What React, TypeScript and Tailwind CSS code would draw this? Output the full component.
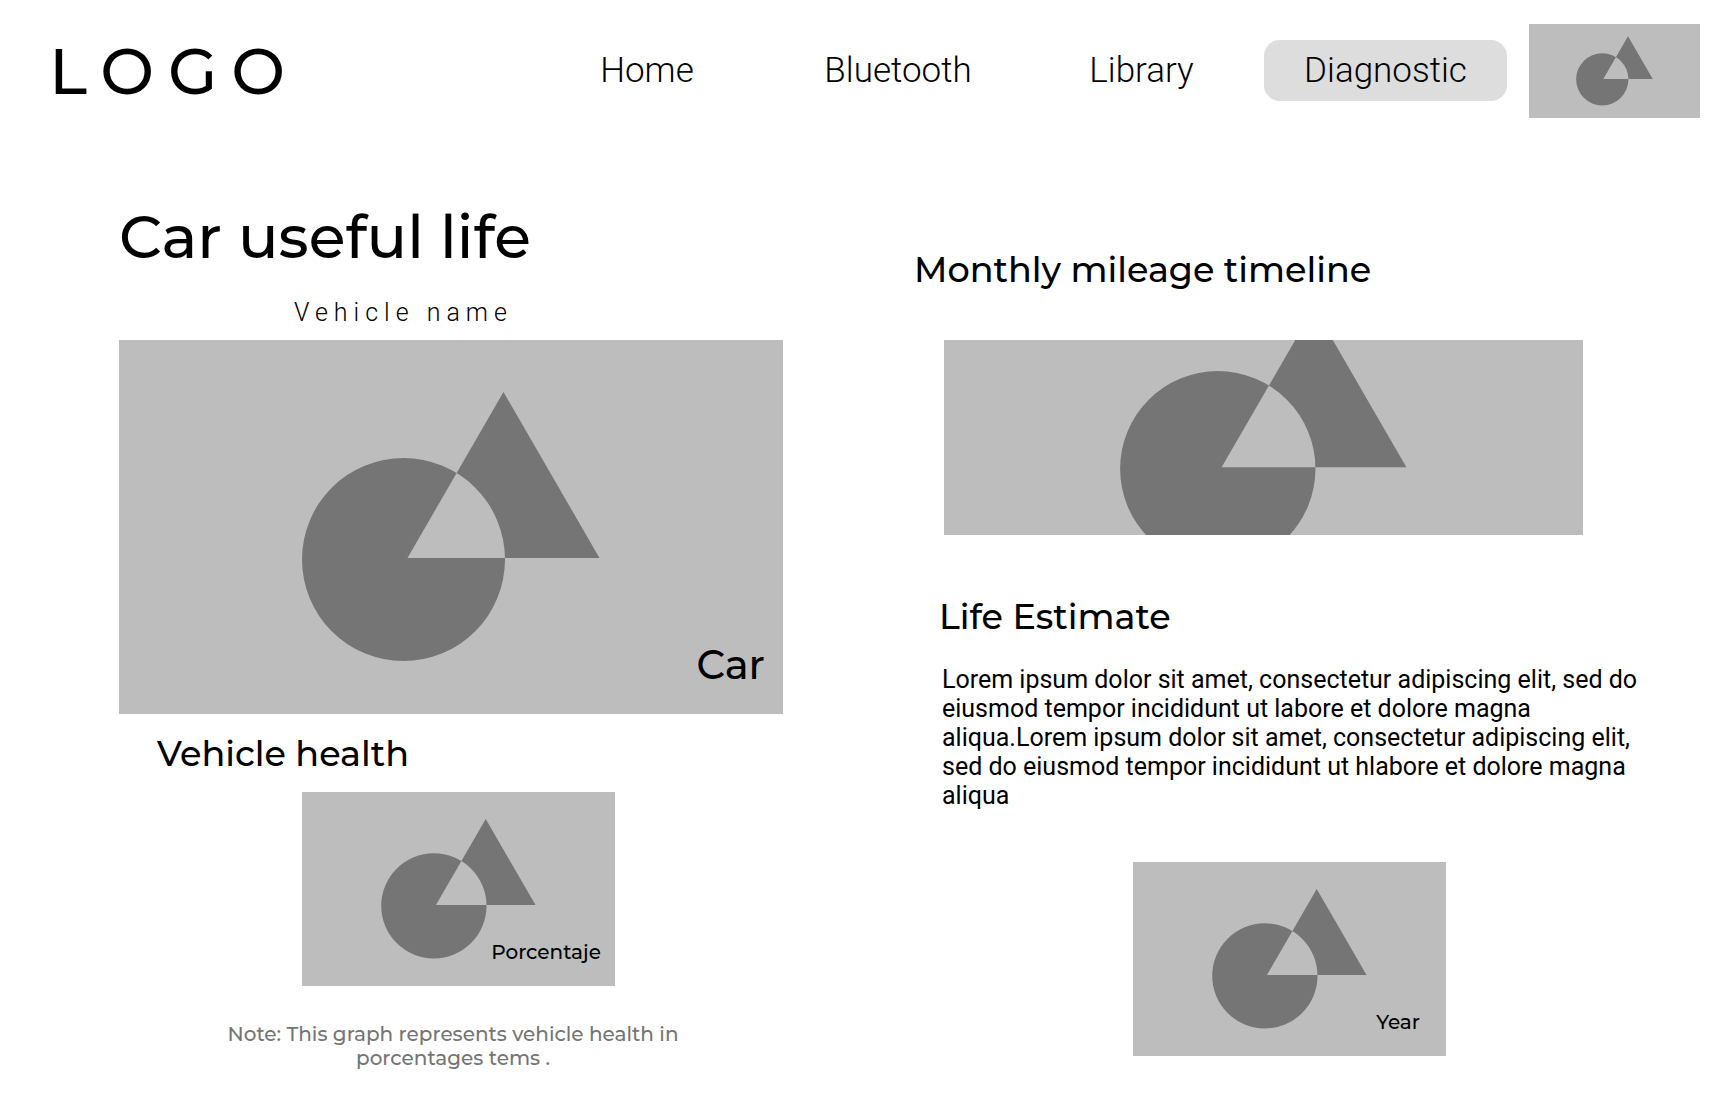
import React from "react";

const heading = "font-['Montserrat','Inter',sans-serif] font-medium";

type PlaceholderProps = {
  label: string;
  className: string;
  children?: React.ReactNode;
};

function Placeholder({ label, className, children }: PlaceholderProps) {
  return (
    <div className={`relative bg-[#bdbdbd] ${className}`}>
      <svg
        role="img"
        aria-label={label}
        viewBox="0 0 664 374"
        preserveAspectRatio="xMidYMid slice"
        className="block h-full w-full"
      >
        <path
          fill="#757575"
          fillRule="evenodd"
          d="M183 219.5a101.5 101.5 0 1 0 203 0a101.5 101.5 0 1 0 -203 0ZM384.500 52L480.500 218H288.500Z"
        />
      </svg>
      {children}
    </div>
  );
}

const links = [
  { name: "Home", width: "w-[260px]", active: false },
  { name: "Bluetooth", width: "w-[242px]", active: false },
  { name: "Library", width: "w-[245px]", active: false },
  { name: "Diagnostic", width: "w-[243px]", active: true },
];

export default function App() {
  return (
    <div className="min-h-screen bg-white pb-12 text-black">
      <header className="flex items-center justify-between pt-6 pr-7 pl-[49px]">
        <a href="#home" className={`${heading} text-[64px] leading-[94px] tracking-[14px]`}>
          LOGO
        </a>
        <div className="flex items-center gap-[22px]">
          <nav aria-label="Main" className="flex">
            {links.map((link) => (
              <a
                key={link.name}
                href={`#${link.name.toLowerCase()}`}
                aria-current={link.active ? "page" : undefined}
                className={`${link.width} ${
                  link.active ? "bg-[#dddddd]" : ""
                } mb-[1px] rounded-2xl text-center font-['Roboto',sans-serif] text-[35px] leading-[61px] font-light`}
              >
                {link.name}
              </a>
            ))}
          </nav>
          <Placeholder label="Profile" className="h-[94px] w-[171px] shrink-0" />
        </div>
      </header>

      <main className="grid grid-cols-[664fr_734fr] gap-x-[131px] pt-[82px] pr-20 pl-[119px]">
        <section>
          <h1 className={`${heading} text-[60px] leading-[74px]`}>Car useful life</h1>
          <p className="mt-[23px] pl-[175px] font-['Roboto',sans-serif] text-[25px] leading-[32px] font-light tracking-[6px]">
            Vehicle name
          </p>
          <Placeholder label="Car" className="mt-[11px] aspect-[664/374]">
            <span className={`${heading} absolute right-[18px] bottom-[25px] text-[40px] leading-[48px]`}>
              Car
            </span>
          </Placeholder>
          <h2 className={`${heading} mt-[18px] pl-[38px] text-[35px] leading-[44px]`}>
            Vehicle health
          </h2>
          <Placeholder label="Vehicle health graph" className="mt-4 ml-[183px] h-[194px] w-[313px]">
            <span className={`${heading} absolute right-[14px] bottom-[22px] text-[20px] leading-[24px]`}>
              Porcentaje
            </span>
          </Placeholder>
          <p
            className={`${heading} mt-9 ml-[94px] w-[480px] text-center text-[20px] leading-[24px] text-[#757575]`}
          >
            Note: This graph represents vehicle health in porcentages tems .
          </p>
        </section>

        <section className="pt-[48px]">
          <h2 className={`${heading} text-[35px] leading-[44px]`}>Monthly mileage timeline</h2>
          <Placeholder
            label="Monthly mileage timeline graph"
            className="mt-[48px] mr-[65px] ml-[30px] aspect-[639/195]"
          />
          <h2 className={`${heading} mt-[60px] pl-[25px] text-[35px] leading-[44px]`}>Life Estimate</h2>
          <p className="mt-[26px] pl-7 font-['Roboto',sans-serif] text-[25px] leading-[29px]">
            Lorem ipsum dolor sit amet, consectetur adipiscing elit, sed do eiusmod tempor incididunt ut
            labore et dolore magna aliqua.Lorem ipsum dolor sit amet, consectetur adipiscing elit, sed do
            eiusmod tempor incididunt ut hlabore et dolore magna aliqua
          </p>
          <Placeholder label="Life estimate graph" className="mt-[52px] ml-[219px] h-[194px] w-[313px]">
            <span className={`${heading} absolute right-[26px] bottom-[22px] text-[20px] leading-[24px]`}>
              Year
            </span>
          </Placeholder>
        </section>
      </main>
    </div>
  );
}
